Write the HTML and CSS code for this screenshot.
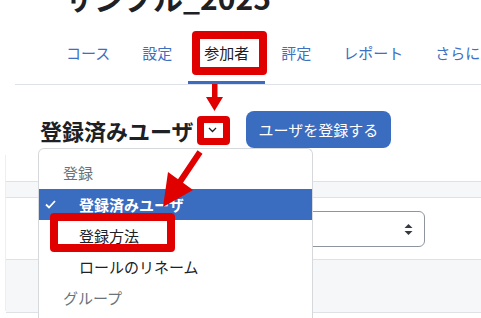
FILE: index.html
```html
<html>
<head>
<title>登録済みユーザ</title>
<link rel="stylesheet" href="styles.css">
</head>
<body>
<div class="course-header">
<h1>サンプル_2025</h1>
</div>
<nav class="secondary-nav">
<ul>
<li><a href="#">コース</a></li>
<li><a href="#">設定</a></li>
<li><a href="#" class="active">参加者</a></li>
<li><a href="#">評定</a></li>
<li><a href="#">レポート</a></li>
<li><a href="#">さらに</a></li>
</ul>
</nav>
<div class="main">
<div class="heading-row">
<h2>登録済みユーザ</h2>
<button class="menu-toggle"><svg width="9" height="6" viewBox="0 0 9 6"><polyline points="1,1 4.5,4.5 8,1" fill="none" stroke="#1d2125" stroke-width="1.3"/></svg></button>
<button class="btn-primary">ユーザを登録する</button>
</div>
<div class="dropdown-menu">
<div class="menu-header">登録</div>
<div class="menu-item active"><svg class="check" width="11" height="9" viewBox="0 0 11 9"><polyline points="1,4.5 4,7.5 10,1" fill="none" stroke="#fff" stroke-width="1.8"/></svg>登録済みユーザ</div>
<div class="menu-item">登録方法</div>
<div class="menu-item">ロールのリネーム</div>
<div class="menu-header">グループ</div>
</div>
</div>
<div class="panel">
<div class="band"></div>
<div class="select-row">
<div class="select-box"><svg width="9" height="13" viewBox="0 0 9 13"><polygon points="4.5,1 8.5,5 0.5,5" fill="#343a40"/><polygon points="0.5,8 8.5,8 4.5,12" fill="#343a40"/></svg></div>
</div>
<div class="band tall"></div>
</div>

<div class="annotations">
<div class="mark mark-tab"></div>
<div class="mark mark-toggle"></div>
<div class="mark mark-item"></div>
<svg class="arrows" width="481" height="318" viewBox="0 0 481 318">
<polygon points="212,84 217.5,84 217.5,97 223,97 214.5,111 206,97 212,97" fill="#e00000"/>
<polygon points="197.5,150.3 202.5,153.7 183,182.7 193,190 163,207 168,172 178,179.3" fill="#e00000"/>
</svg>
</div>
</body>
</html>
```

FILE: styles.css
```css
html {
	overflow: hidden;
}
body {
	margin: 0;
	font-family: "Noto Sans CJK JP", "Noto Sans", sans-serif;
	color: #1d2125;
	background: #fff;
	position: relative;
	height: 318px;
	overflow: hidden;
}
h1, h2 {
	margin: 0;
	padding: 0;
}
.course-header h1 {
	margin: -21px 0 0 64px;
	font-size: 30px;
	line-height: 36px;
	font-weight: bold;
}
.secondary-nav {
	margin: 13px 0 0 15px;
}
.secondary-nav ul {
	display: flex;
	list-style: none;
	margin: 0;
	padding: 0 0 0 35px;
	border-bottom: 1px solid #dee2e6;
	white-space: nowrap;
}
.secondary-nav a {
	display: block;
	padding: 14px 16px 17px;
	font-size: 15px;
	line-height: 22px;
	color: #3d6fc2;
	text-decoration: none;
	border-bottom: 3px solid transparent;
}
.secondary-nav a.active {
	color: #1d2125;
	border-bottom-color: #3a6cbf;
}
.main {
	position: relative;
	padding-left: 40px;
}
.heading-row {
	display: flex;
	align-items: center;
	margin-top: 26px;
	height: 37px;
}
.heading-row h2 {
	font-size: 22px;
	line-height: 30px;
	font-weight: bold;
}
.menu-toggle {
	display: flex;
	align-items: center;
	justify-content: center;
	width: 18px;
	height: 14px;
	margin-left: 10px;
	padding: 0;
	border: 0;
	background: #fff;
}
.btn-primary {
	margin-left: 24px;
	height: 37px;
	padding: 0 13px;
	border: 0;
	border-radius: 8px;
	background: #3a6cbf;
	color: #fff;
	font-family: inherit;
	font-size: 15px;
}
.dropdown-menu {
	position: absolute;
	left: 38px;
	top: 37px;
	width: 273px;
	height: 162px;
	padding-top: 8px;
	background: #fff;
	border: 1px solid #d6d9dc;
	border-bottom: 0;
	border-radius: 6px 6px 0 0;
	z-index: 2;
	font-size: 15px;
}
.menu-header {
	height: 32px;
	line-height: 32px;
	padding-left: 24px;
	color: #6a737b;
}
.menu-item {
	position: relative;
	height: 31px;
	line-height: 31px;
	padding-left: 40px;
	color: #1d2125;
}
.menu-item.active {
	background: #3a6cbf;
	color: #fff;
	font-weight: bold;
}
.check {
	position: absolute;
	left: 6px;
	top: 11px;
}
.panel {
	margin: 7px 0 0 5px;
	padding-top: 26px;
	border-left: 1px solid #eceef0;
	height: 130px;
}
.band {
	height: 15px;
	background: #f6f7f8;
	border-top: 1px solid #dee2e6;
	border-bottom: 1px solid #dee2e6;
}
.band.tall {
	height: 52px;
	margin-top: 12px;
}
.select-row {
	margin-top: 13px;
	height: 36px;
}
.select-box {
	margin-left: 205px;
	width: 201px;
	height: 34px;
	padding-right: 11px;
	border: 1px solid #8f959e;
	border-radius: 6px;
	display: flex;
	align-items: center;
	justify-content: flex-end;
}
.annotations {
	position: absolute;
	left: 0;
	top: 0;
	width: 481px;
	height: 318px;
	z-index: 5;
	pointer-events: none;
}
.mark {
	position: absolute;
	box-sizing: border-box;
	border: 8px solid #e00000;
	border-radius: 4px;
}
.mark-tab {
	left: 192px;
	top: 31px;
	width: 75px;
	height: 44px;
}
.mark-toggle {
	left: 197px;
	top: 116px;
	width: 33px;
	height: 29px;
	border-width: 7px;
}
.mark-item {
	left: 50px;
	top: 213px;
	width: 125px;
	height: 39px;
}
.arrows {
	position: absolute;
	left: 0;
	top: 0;
}
```
